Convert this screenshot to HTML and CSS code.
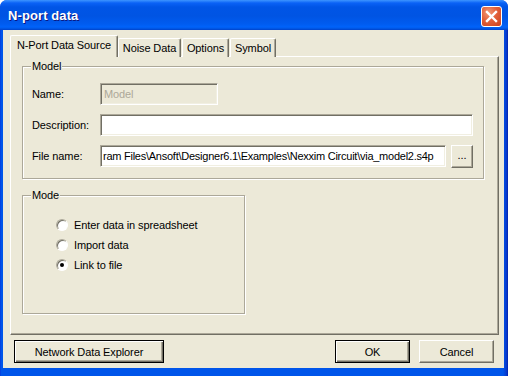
FILE: index.html
```html
<!DOCTYPE html>
<html>
<head>
<meta charset="utf-8">
<link rel="stylesheet" href="styles.css">
</head>
<body>
<div class="window">
  <div class="titlebar">
    <span class="title">N-port data</span>
    <span class="close">
      <svg width="13" height="13" viewBox="0 0 13 13"><path d="M2 2 L11 11 M11 2 L2 11" stroke="#fff" stroke-width="2.4" stroke-linecap="square"/></svg>
    </span>
  </div>
  <div class="client">
    <div class="tabs">
      <div class="tab active w1">N-Port Data Source</div>
      <div class="tab w2">Noise Data</div>
      <div class="tab w3">Options</div>
      <div class="tab w4">Symbol</div>
    </div>
    <div class="page">
      <div class="group model">
        <span class="legend">Model</span>
        <div class="row">
          <span class="label">Name:</span>
          <div class="field disabled name">Model</div>
        </div>
        <div class="row">
          <span class="label">Description:</span>
          <div class="field desc"></div>
        </div>
        <div class="row">
          <span class="label">File name:</span>
          <div class="field file">ram Files\Ansoft\Designer6.1\Examples\Nexxim Circuit\via_model2.s4p</div>
          <div class="btn browse">...</div>
        </div>
      </div>
      <div class="group mode">
        <span class="legend">Mode</span>
        <div class="opts">
          <div class="opt"><span class="radio"></span>Enter data in spreadsheet</div>
          <div class="opt"><span class="radio"></span>Import data</div>
          <div class="opt"><span class="radio checked"></span>Link to file</div>
        </div>
      </div>
    </div>
    <div class="buttons">
      <div class="btn default nde">Network Data Explorer</div>
      <div class="spacer"></div>
      <div class="btn default ok">OK</div>
      <div class="btn cancel">Cancel</div>
    </div>
  </div>
</div>
</body>
</html>
```
FILE: styles.css
```css
html, body {
  margin: 0;
  padding: 0;
  background: #fff;
}
body {
  font-family: "Liberation Sans", Arial, sans-serif;
  font-size: 11px;
  letter-spacing: -0.1px;
  color: #000;
}
.window {
  width: 508px;
  height: 376px;
  box-sizing: border-box;
  display: flex;
  flex-direction: column;
  border-radius: 7px 7px 0 0;
  background: linear-gradient(to right, #0831D9 0, #0055EA 1px, #0055EA 503px, #0734C8 507px, #001EA0 508px);
  overflow: hidden;
}
.titlebar {
  height: 30px;
  flex: none;
  display: flex;
  justify-content: space-between;
  align-items: flex-start;
  padding: 0 6px 0 8px;
  background: linear-gradient(#3D95FF 0, #0A62F6 3px, #0055E6 7px, #0054E3 16px, #005CF0 24px, #0063FA 27px, #0052DE 29px, #0040C8 30px);
}
.title {
  margin-top: 8px;
  color: #fff;
  font-weight: bold;
  font-size: 13px;
  text-shadow: 1px 1px 0 #0A1883;
  letter-spacing: 0.1px;
}
.close {
  margin-top: 6px;
  width: 21px;
  height: 21px;
  box-sizing: border-box;
  border: 1px solid #fff;
  border-radius: 3px;
  background: radial-gradient(circle at 35% 30%, #F19A78 0, #E2603A 45%, #C9401C 100%);
  display: flex;
  align-items: center;
  justify-content: center;
}
.client {
  flex: 1;
  margin: 0 4px 8px 3px;
  background: #ECE9D8;
  padding: 6px 5px 4px 7px;
  display: flex;
  flex-direction: column;
}
.tabs {
  height: 21px;
  display: flex;
  align-items: flex-end;
  position: relative;
  z-index: 1;
  margin-bottom: -1px;
}
.tab {
  height: 19px;
  box-sizing: border-box;
  border-top: 1px solid #fff;
  border-left: 1px solid #fff;
  border-right: 1px solid #716F64;
  box-shadow: inset -1px 0 0 #ACA899;
  border-radius: 2px 2px 0 0;
  display: flex;
  align-items: center;
  justify-content: center;
  padding-bottom: 1px;
  margin-right: 1px;
  background: #ECE9D8;
}
.tab.active {
  height: 22px;
  padding-bottom: 3px;
  margin-right: 0;
}
.w1 { width: 108px; }
.w2 { width: 63px; }
.w3 { width: 47px; }
.w4 { width: 46px; }
.page {
  width: 489px;
  height: 279px;
  box-sizing: border-box;
  border-top: 1px solid #fff;
  border-left: 1px solid #fff;
  border-right: 1px solid #716F64;
  border-bottom: 1px solid #716F64;
  box-shadow: inset -1px -1px 0 #ACA899;
  padding: 9px 0 0 11px;
}
.group {
  position: relative;
  box-sizing: border-box;
  border: 1px solid #ACA899;
  box-shadow: inset 1px 1px 0 #fff, 1px 1px 0 #fff;
}
.legend {
  position: absolute;
  top: -8px;
  left: 8px;
  padding: 0 1px;
  background: #ECE9D8;
  line-height: 14px;
}
.model {
  width: 462px;
  height: 113px;
  padding: 16px 0 0 9px;
  display: flex;
  flex-direction: column;
  gap: 9px;
}
.row {
  display: flex;
  align-items: center;
  height: 22px;
}
.label {
  width: 68px;
  flex: none;
}
.field {
  height: 22px;
  box-sizing: border-box;
  border: 1px solid;
  border-color: #ACA899 #fff #fff #ACA899;
  box-shadow: inset 1px 1px 0 #716F64, inset -1px -1px 0 #F1EFE2;
  background: #fff;
  padding: 0 2px 0 3px;
  display: flex;
  align-items: center;
  white-space: nowrap;
  overflow: hidden;
}
.field.disabled {
  background: #ECE9D8;
  color: #ACA899;
}
.name { width: 118px; }
.desc { width: 373px; }
.file {
  width: 346px;
  padding-left: 2px;
  letter-spacing: -0.25px;
}
.btn {
  box-sizing: border-box;
  border: 1px solid;
  border-color: #fff #716F64 #716F64 #fff;
  box-shadow: inset -1px -1px 0 #ACA899;
  background: #ECE9D8;
  display: flex;
  align-items: center;
  justify-content: center;
  white-space: nowrap;
}
.btn.default {
  border: 1px solid #000;
  box-shadow: inset 1px 1px 0 #fff, inset -1px -1px 0 #716F64, inset -2px -2px 0 #ACA899;
}
.browse {
  width: 22px;
  height: 23px;
  margin-left: 5px;
  padding-bottom: 2px;
}
.mode {
  margin-top: 16px;
  width: 223px;
  height: 119px;
  padding: 19px 0 0 33px;
}
.opts {
  display: flex;
  flex-direction: column;
}
.opt {
  height: 20px;
  display: flex;
  align-items: center;
}
.radio {
  width: 12px;
  height: 12px;
  box-sizing: border-box;
  border-radius: 50%;
  border: 1px solid;
  border-color: #ACA899 #fff #fff #ACA899;
  box-shadow: inset 1px 1px 0 #716F64;
  background: #fff;
  margin-right: 6px;
  position: relative;
}
.radio.checked::after {
  content: "";
  position: absolute;
  left: 3px;
  top: 3px;
  width: 4px;
  height: 4px;
  border-radius: 50%;
  background: #000;
}
.buttons {
  margin-top: 5px;
  height: 23px;
  display: flex;
  padding: 0 5px 0 4px;
}
.spacer { flex: 1; }
.nde { width: 150px; }
.ok { width: 75px; }
.cancel { width: 75px; margin-left: 9px; }
```
